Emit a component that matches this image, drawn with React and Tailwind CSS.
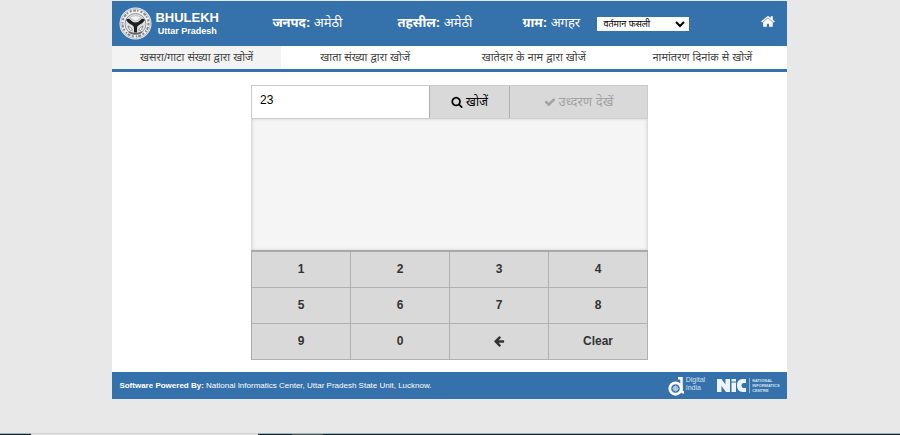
import { useState } from "react";

const PLACES = [
  { label: "जनपद:", value: "अमेठी" },
  { label: "तहसील:", value: "अमेठी" },
  { label: "ग्राम:", value: "अगहर" },
];

const TABS = [
  "खसरा/गाटा संख्या द्वारा खोजें",
  "खाता संख्या द्वारा खोजें",
  "खातेदार के नाम द्वारा खोजें",
  "नामांतरण दिनांक से खोजें",
];

const KEYS = ["1", "2", "3", "4", "5", "6", "7", "8", "9", "0", "back", "Clear"];

const ICONS = {
  home: "M1408 992v480q0 26-19 45t-45 19h-384v-384h-256v384h-384q-26 0-45-19t-19-45v-480q0-1 .5-3t.5-3l575-474 575 474q1 2 1 6zm223-69l-62 74q-8 9-21 11h-3q-13 0-21-7l-692-577-692 577q-12 8-24 7-13-2-21-11l-62-74q-8-10-7-23.5t11-21.5l719-599q32-26 76-26t76 26l244 204v-195q0-14 9-23t23-9h192q14 0 23 9t9 23v408l219 182q10 8 11 21.5t-7 23.5z",
  search:
    "M1216 832q0-185-131.500-316.500t-316.500-131.500-316.500 131.500-131.500 316.500 131.500 316.500 316.500 131.500 316.500-131.500 131.500-316.500zm512 832q0 52-38 90t-90 38q-54 0-90-38l-343-342q-179 124-399 124-143 0-273.500-55.500t-225-150-150-225-55.500-273.500 55.500-273.500 150-225 225-150 273.500-55.500 273.500 55.500 225 150 150 225 55.500 273.500q0 220-124 399l343 343q37 37 37 90z",
  check:
    "M1671 566q0 40-28 68l-724 724-136 136q-28 28-68 28t-68-28l-136-136-362-362q-28-28-28-68t28-68l136-136q28-28 68-28t68 28l294 295 656-657q28-28 68-28t68 28l136 136q28 28 28 68z",
  back: "M1664 896v128q0 53-32.500 90.500t-84.500 37.500h-704l293 294q38 36 38 90t-38 90l-75 76q-37 37-90 37-52 0-91-37l-651-652q-37-37-37-90 0-52 37-91l651-650q38-38 91-38 52 0 90 38l75 74q38 38 38 91t-38 91l-293 293h704q52 0 84.500 37.500t32.500 90.500z",
};

function Icon({ name, className }) {
  return (
    <svg viewBox="0 0 1792 1792" fill="currentColor" className={className} aria-hidden="true">
      <path d={ICONS[name]} />
    </svg>
  );
}

function StateEmblem() {
  return (
    <svg viewBox="0 0 66 66" className="h-[33px] w-[33px] shrink-0" role="img" aria-label="Uttar Pradesh emblem">
      <circle cx="33" cy="33" r="32" fill="#f1f2f3" />
      <circle cx="33" cy="33" r="30" fill="none" stroke="#a9adb1" strokeWidth="1.5" />
      <circle cx="33" cy="33" r="26" fill="none" stroke="#85898d" strokeWidth="4" strokeDasharray="4 3 6 2 3 4" />
      <circle cx="33" cy="34" r="21" fill="#dcdedf" stroke="#77797b" strokeWidth="1.5" />
      <path d="M21 22q12-9 24 0l-12 6z" fill="#f3f3f3" stroke="#999" strokeWidth="1" />
      <path d="M14 26q5-5 9 0 5 5 10 5t10-5q4-5 9 0-4 6-10 9-6 2-6 8v8h-6v-8q0-6-6-8-6-3-10-9z" fill="#1d1f21" />
      <path d="M18 38q6 2 9 8-5 2-6-1zM48 38q-6 2-9 8 5 2 6-1z" fill="#fafafa" stroke="#777" strokeWidth="1.5" />
      <path d="M20 50q13 7 26 0" fill="none" stroke="#666" strokeWidth="3" />
    </svg>
  );
}

function DigitalIndiaMark() {
  return (
    <svg viewBox="0 0 34 40" className="h-5 w-[17px]" aria-hidden="true">
      <path d="M20 4.500h7V28q0 5 5 5" fill="none" stroke="#fff" strokeWidth="5" />
      <circle cx="15" cy="25" r="11.500" fill="none" stroke="#fff" strokeWidth="5.500" />
      <circle cx="15" cy="25" r="5.500" fill="#a9c6e0" />
      <path d="M15 17v16M7 25h16" stroke="#a9c6e0" strokeWidth="1" />
    </svg>
  );
}

function NicMark() {
  return (
    <svg viewBox="0 0 58 26" className="h-[13px] w-[29px]" role="img" aria-label="NIC">
      <path d="M0 26V0h9l8 11V0h9v26h-8L9 14v12z" fill="#edf3f8" />
      <path d="M29 0h9v5h-9zM29 7h9v19h-9z" fill="#edf3f8" />
      <path d="M58 0v8h-5q-4 0-4 5t4 5h5v8h-7q-11 0-11-13T51 0z" fill="#edf3f8" />
    </svg>
  );
}

export default function App() {
  const [query, setQuery] = useState("23");
  const [activeTab, setActiveTab] = useState(0);

  function press(key) {
    if (key === "Clear") setQuery("");
    else if (key === "back") setQuery((prev) => prev.slice(0, -1));
    else setQuery((prev) => prev + key);
  }

  return (
    <div className="flex min-h-screen flex-col bg-[#e8e8e8] font-['Liberation_Sans','Noto_Sans',sans-serif]">
      <div className="pt-px pr-px">
        <div className="mx-auto w-3/4 bg-white">
          <header className="flex h-[45px] items-center bg-[#3571ab] px-[7px] text-white">
            <div className="flex w-[153px] shrink-0 items-center gap-[3px]">
              <StateEmblem />
              <div className="text-center font-bold whitespace-nowrap">
                <div className="text-[13px] leading-[14px]">BHULEKH</div>
                <div className="text-[9px] leading-[12px]">Uttar Pradesh</div>
              </div>
            </div>
            {PLACES.map((place) => (
              <div key={place.label} className="w-[125px] shrink-0 pb-0.5 text-[13px] leading-5 whitespace-nowrap last-of-type:w-[75px]">
                <b>{place.label}</b> {place.value}
              </div>
            ))}
            <select
              aria-label="फसली"
              className="h-[14px] w-[92px] shrink-0 border border-white bg-white px-px text-[9px] leading-3 text-black"
            >
              <option>वर्तमान फसली</option>
            </select>
            <a href="#home" aria-label="Home" className="mr-1 ml-auto pb-1">
              <Icon name="home" className="h-[15px] w-[15px]" />
            </a>
          </header>

          <nav className="grid grid-cols-4 border-b-[3px] border-[#3571ab]">
            {TABS.map((tab, index) => (
              <a
                key={tab}
                href={`#tab-${index}`}
                onClick={() => setActiveTab(index)}
                className={`h-[23px] text-center text-[11px] leading-[22px] whitespace-nowrap text-[#444] ${
                  activeTab === index ? "bg-[#f3f3f3]" : "bg-white"
                }`}
              >
                {tab}
              </a>
            ))}
          </nav>

          <main className="px-4 pt-[13px] pb-3">
            <div className="mx-auto w-full max-w-[397px]">
              <div className="flex h-[34px] border border-[#ccc]">
                <input
                  type="text"
                  aria-label="खसरा/गाटा संख्या"
                  value={query}
                  onChange={(e) => setQuery(e.target.value)}
                  className="w-0 flex-1 bg-white px-2 pb-1 text-[12px] text-black outline-none"
                />
                <button
                  type="button"
                  className="flex w-20 items-center justify-center gap-[3px] border-l border-[#b0b0b0] bg-[#d9d9d9] text-[12px] text-black"
                >
                  <Icon name="search" className="h-3 w-3" />
                  खोजें
                </button>
                <button
                  type="button"
                  disabled
                  className="flex w-[138px] items-center justify-center gap-[3px] border-l border-[#b0b0b0] bg-[#d9d9d9] text-[13px] text-[#a3a3a3]"
                >
                  <Icon name="check" className="h-3 w-3" />
                  उध्दरण देखें
                </button>
              </div>

              <div className="h-[131px] border-x border-[#ddd] bg-[#f5f5f5] shadow-[inset_0_0_3px_#ccc]" />

              <div className="grid grid-cols-4 border-t-2 border-l border-[#a9a9a9] bg-[#d9d9d9]">
                {KEYS.map((key) => (
                  <button
                    key={key}
                    type="button"
                    aria-label={key === "back" ? "Backspace" : key}
                    onClick={() => press(key)}
                    className="flex h-9 items-center justify-center border-r border-b border-[#b0b0b0] pb-px text-[12px] font-bold text-[#333]"
                  >
                    {key === "back" ? <Icon name="back" className="h-3 w-3" /> : key}
                  </button>
                ))}
              </div>
            </div>
          </main>

          <footer className="flex h-[27px] items-center bg-[#3571ab] px-[7px] text-white">
            <p className="text-[8px] leading-3 whitespace-nowrap">
              <b>Software Powered By:</b> National Informatics Center, Uttar Pradesh State Unit, Lucknow.
            </p>
            <div className="ml-auto flex items-center gap-px text-[7px] leading-2 text-[#d5e3ef]">
              <DigitalIndiaMark />
              <div className="pb-1">
                Digital
                <br />
                India
              </div>
            </div>
            <div className="ml-3 flex items-center gap-[3px] text-[#d5e3ef]">
              <NicMark />
              <div className="border-l border-[#8fb2d3] pl-[2px] text-[4px] leading-[5px] font-bold">
                NATIONAL
                <br />
                INFORMATICS
                <br />
                CENTRE
              </div>
            </div>
          </footer>
        </div>
      </div>

      <div className="mt-auto flex h-[2px]">
        <div className="w-[31px] border-t border-[#9fb3b3] bg-[#10252d]" />
        <div className="w-[227px] border-t border-[#d4d4d4] bg-[#e3e3e3]" />
        <div className="w-[34px] border-t border-[#9fb3b3] bg-[#10252d]" />
        <div className="w-[31px] border-t border-[#9fb3b3] bg-[#4b5559]" />
        <div className="flex-1 border-t border-[#9fb3b3] bg-[#10252d]" />
      </div>
    </div>
  );
}
